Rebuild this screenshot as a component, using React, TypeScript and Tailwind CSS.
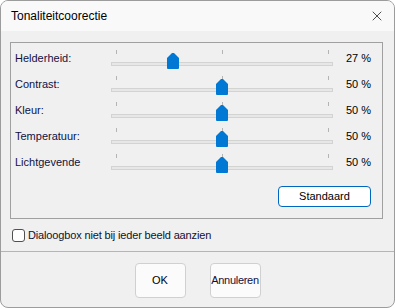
import React from 'react';
import { X } from 'lucide-react';

const rows = [
  { label: 'Helderheid:', value: 27 },
  { label: 'Contrast:', value: 50 },
  { label: 'Kleur:', value: 50 },
  { label: 'Temperatuur:', value: 50 },
  { label: 'Lichtgevende', value: 50 },
];

function Slider({ value }: { value: number }) {
  const left = 5 + (value / 100) * 212 - 6;
  return (
    <div className="relative w-[222px] h-[26px]">
      {/* ticks */}
      <div className="absolute top-[3px] left-[5px] w-px h-[4px] bg-[#b4b4b4]" />
      <div className="absolute top-[3px] left-[111px] w-px h-[4px] bg-[#b4b4b4]" />
      <div className="absolute top-[3px] left-[217px] w-px h-[4px] bg-[#b4b4b4]" />
      {/* track */}
      <div className="absolute top-[15px] left-0 w-[222px] h-[4px] bg-[#e7e7e7] border border-[#d2d4d2]" />
      {/* thumb */}
      <svg className="absolute top-[6px]" style={{ left }} width="12" height="16" viewBox="0 0 12 16">
        <path d="M0 5 L5 0 H7 L12 5 V15 Q12 16 11 16 H1 Q0 16 0 15 Z" fill="#0078d4" />
      </svg>
    </div>
  );
}

export default function App() {
  return (
    <div className="w-[395px] h-[308px] bg-[#f0f0f0] border border-[#9c9c9c] rounded-[8px] overflow-hidden flex flex-col text-[#1a1a1a]" style={{ fontFamily: '"Liberation Sans", Arial, sans-serif' }}>
      {/* Title bar */}
      <div className="h-[30px] shrink-0 bg-[#f9f9f9] flex items-center justify-between pl-[10px] pr-[9px]">
        <span className="text-[12px] text-black">Tonaliteitcoorectie</span>
        <X className="w-[16px] h-[16px] text-[#222]" strokeWidth={1.2} />
      </div>

      {/* Body */}
      <div className="pt-[11px] pl-[9px] pr-[11px]">
        <div className="border border-[#a0a0a0] h-[177px] pt-[4px] flex flex-col text-[11px]">
          {rows.map((r) => (
            <div key={r.label} className="flex items-start h-[26px]">
              <span className="w-[100px] pl-[4px] pt-[4px] leading-[14px] text-[#101040]">{r.label}</span>
              <Slider value={r.value} />
              <span className="pl-[13px] pt-[4px] leading-[14px] text-black">{r.value} %</span>
            </div>
          ))}
          <div className="flex justify-end pr-[11px] mt-[9px]">
            <button className="w-[93px] h-[21px] bg-white border border-[#0067c0] rounded-[4px] text-[11px] text-black flex items-center justify-center">
              Standaard
            </button>
          </div>
        </div>
      </div>

      {/* Checkbox */}
      <div className="flex items-center gap-[3px] pl-[11px] mt-[9px] h-[15px] text-[11px]">
        <div className="w-[13px] h-[13px] bg-white border border-[#505050] rounded-[3px]" />
        <span className="text-[#101030] tracking-[-0.15px]">Dialoogbox niet bij ieder beeld aanzien</span>
      </div>

      <div className="mt-[8px] h-px bg-[#b5b5b5]" />

      {/* Footer */}
      <div className="flex justify-center gap-[24px] pt-[11px]">
        <button className="w-[51px] h-[35px] bg-[#fbfbfb] border border-[#d0d0d0] rounded-[4px] text-[11px] text-black">OK</button>
        <button className="w-[51px] h-[35px] bg-[#fbfbfb] border border-[#d0d0d0] rounded-[4px] text-[11px] text-[#101040] tracking-[-0.3px]">Annuleren</button>
      </div>
    </div>
  );
}
